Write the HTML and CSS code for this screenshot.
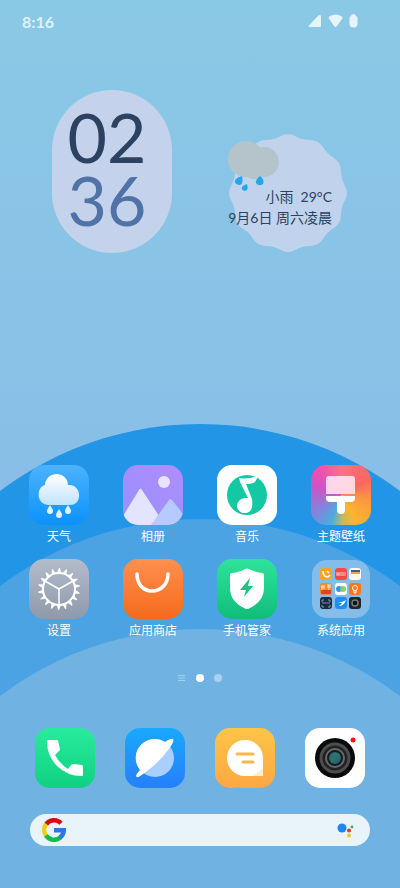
FILE: index.html
```html
<!DOCTYPE html>
<html lang="zh-CN">
<head>
  <meta charset="UTF-8">
  <meta name="viewport" content="width=device-width, initial-scale=1.0">
  <title>桌面</title>
  <link rel="stylesheet" href="styles.css">
</head>
<body>
  <svg class="wallpaper" viewBox="0 0 400 888" preserveAspectRatio="xMidYMax slice" aria-hidden="true">
    <circle cx="200" cy="756" r="332" fill="#2295e6"/>
    <circle cx="200" cy="851" r="332" fill="#4ba3e3"/>
    <circle cx="200" cy="961" r="332" fill="#70b3e3"/>
  </svg>

  <header class="status-bar">
    <span class="time">8:16</span>
    <svg class="status-icons" width="50" height="14" viewBox="0 0 50 14" fill="#e6f5fb">
      <path d="M1.500 13 Q0 13 1 11.500 L10.500 1.500 Q13 0 13 2.500 V11.500 Q13 13 11.500 13Z"/>
      <path d="M21 4.500 Q20 3 22 2 Q28 -1 33 2 Q35.500 3 34 5 L29 12 Q27.500 14 26 12Z"/>
      <path d="M43 2 Q43.500 0 45.500 0 Q47.500 0 48 2 Q49.500 2.500 49.500 4 V10 Q49.500 13.500 45.500 13.500 Q41.500 13.500 41.500 10 V4 Q41.500 2.500 43 2Z"/>
    </svg>
  </header>

  <main>
    <section class="widgets">
      <div class="clock">
        <span class="hours">02</span>
        <span class="minutes">36</span>
      </div>
      <div class="weather">
        <svg class="weather-bg" viewBox="-60 -60 120 120">
          <path fill="#c1d3ec" d="M57 -7 Q61 0 57 7 Q53 14 53 22 Q53 30 46 35 Q39 39 35 46 Q30 53 22 53 Q14 53 7 57 Q0 61 -7 57 Q-14 53 -22 53 Q-30 53 -35 46 Q-39 39 -46 35 Q-53 30 -53 22 Q-53 14 -57 7 Q-61 0 -57 -7 Q-53 -14 -53 -22 Q-53 -30 -46 -35 Q-39 -39 -35 -46 Q-30 -53 -22 -53 Q-14 -53 -7 -57 Q0 -61 7 -57 Q14 -53 22 -53 Q30 -53 35 -46 Q39 -39 46 -35 Q53 -30 53 -22 Q53 -14 57 -7Z"/>
          <g fill="#b5c3ca">
            <circle cx="-42" cy="-34" r="18"/>
            <circle cx="-24" cy="-31" r="15"/>
            <circle cx="-34" cy="-27" r="13"/>
          </g>
          <g fill="#22a7ea">
            <path d="M-46 -17 Q-44 -8 -49 -8 Q-54 -9 -53 -13 Q-50 -16 -46 -17Z"/>
            <path d="M-41 -9 Q-39 -3 -43 -2 Q-47 -3 -46 -6 Q-44 -8 -41 -9Z"/>
            <path d="M-28 -17 Q-23 -13 -25 -9 Q-29 -6 -32 -10 Q-33 -13 -28 -17Z"/>
          </g>
        </svg>
        <p class="weather-text">小雨&nbsp; 29°C<br>9月6日 周六凌晨</p>
      </div>
    </section>

    <nav class="apps">
      <button class="app" type="button">
        <svg class="icon" viewBox="0 0 60 60">
          <defs>
            <linearGradient id="sky" x2="0" y2="1"><stop stop-color="#4cb2ff"/><stop offset="1" stop-color="#0b92fb"/></linearGradient>
            <linearGradient id="cloud" x2="0" y2="1"><stop stop-color="#fff"/><stop offset="1" stop-color="#bfe3ff"/></linearGradient>
          </defs>
          <rect width="60" height="60" rx="15" fill="url(#sky)"/>
          <path d="M20 40 C7 40 7 22 16 20 C17 6 38 5 39 20 C53 19 54 40 41 40Z" fill="url(#cloud)"/>
          <g fill="#e1f3ff">
            <path id="drop" d="M21 40 C22 42 24 44 24 46 A3 3 0 0 1 18 46 C18 44 20 42 21 40Z"/>
            <use href="#drop" x="9" y="4"/>
            <use href="#drop" x="18"/>
          </g>
        </svg>
        <span>天气</span>
      </button>
      <button class="app" type="button">
        <svg class="icon" viewBox="0 0 60 60">
          <defs>
            <linearGradient id="violet" x1="1" x2="0" y2="1"><stop stop-color="#b08cff"/><stop offset="1" stop-color="#9591fb"/></linearGradient>
            <clipPath id="tile"><rect width="60" height="60" rx="15"/></clipPath>
          </defs>
          <g clip-path="url(#tile)">
            <rect width="60" height="60" fill="url(#violet)"/>
            <circle cx="41" cy="17" r="6" fill="#e9e3ff"/>
            <path d="M0 51 L16 25 Q17 22 19 25 L42 60 H0Z" fill="#e3e4ff"/>
            <path d="M28 60 L46 35 Q47 33 49 35 L60 49 V60Z" fill="#b7caff"/>
          </g>
        </svg>
        <span>相册</span>
      </button>
      <button class="app" type="button">
        <svg class="icon" viewBox="0 0 60 60">
          <rect width="60" height="60" rx="15" fill="#fff"/>
          <circle cx="30" cy="30" r="20" fill="#13c9a4"/>
          <path d="M22 13 Q33 15 42 10 L38 17 Q35 19 29 19 L35 34 Q37 48 28 48 A7.500 7.500 0 0 1 20 41 Q21 33 29 33 L31 33 L23 17Z" fill="#fff"/>
        </svg>
        <span>音乐</span>
      </button>
      <button class="app" type="button">
        <svg class="icon theme" viewBox="0 0 60 60">
          <path d="M15 14 Q15 11 18 11 H41 Q44 11 44 14 V29 H15Z" fill="#ffe3ef" fill-opacity=".9"/>
          <path d="M15 31 H44 V33 Q44 37 40 37 H34 V45 Q34 49 30 49 Q26 49 26 45 V37 H19 Q15 37 15 33Z" fill="#fff"/>
        </svg>
        <span>主题壁纸</span>
      </button>
      <button class="app" type="button">
        <svg class="icon" viewBox="0 0 60 60">
          <defs>
            <linearGradient id="steel" x2="0" y2="1"><stop stop-color="#b3bccb"/><stop offset="1" stop-color="#8f99aa"/></linearGradient>
          </defs>
          <rect width="60" height="60" rx="15" fill="url(#steel)"/>
          <g transform="translate(30 30)" fill="#fff">
            <circle r="16" fill="none" stroke="#fff" stroke-width="2"/>
            <path d="M0 0 V16 M0 0 L-14 -8 M0 0 L14 -8" stroke="#fff" stroke-width="1.500"/>
            <g id="teeth">
              <path id="tooth" d="M-2 -16 L0 -21 L1 -21 L2 -16Z"/>
              <use href="#tooth" transform="rotate(20)"/>
              <use href="#tooth" transform="rotate(40)"/>
            </g>
            <use href="#teeth" transform="rotate(60)"/>
            <use href="#teeth" transform="rotate(120)"/>
            <use href="#teeth" transform="rotate(180)"/>
            <use href="#teeth" transform="rotate(240)"/>
            <use href="#teeth" transform="rotate(300)"/>
          </g>
        </svg>
        <span>设置</span>
      </button>
      <button class="app" type="button">
        <svg class="icon" viewBox="0 0 60 60">
          <defs>
            <linearGradient id="orange" x2="0" y2="1"><stop stop-color="#ff8f50"/><stop offset="1" stop-color="#f46b1b"/></linearGradient>
          </defs>
          <rect width="60" height="60" rx="15" fill="url(#orange)"/>
          <path d="M14 15 C14 25 20 32 29 32 S45 25 45 15" fill="none" stroke="#fff" stroke-width="3.500" stroke-linecap="round"/>
        </svg>
        <span>应用商店</span>
      </button>
      <button class="app" type="button">
        <svg class="icon" viewBox="0 0 60 60">
          <defs>
            <linearGradient id="green" x2="0" y2="1"><stop stop-color="#2fe39b"/><stop offset="1" stop-color="#10bd7a"/></linearGradient>
          </defs>
          <rect width="60" height="60" rx="15" fill="url(#green)"/>
          <path d="M28 10 Q30 9 32 10 Q37 13 45 14 Q47 14 47 16 V29 Q47 43 31 50 Q30 50 29 50 Q13 43 13 29 V16 Q13 14 15 14 Q23 13 28 10Z" fill="#fff"/>
          <path d="M33 19 L23 31 H29 L27 38 L36 27 H31Z" fill="#18c57f"/>
        </svg>
        <span>手机管家</span>
      </button>
      <button class="app" type="button">
        <svg class="icon" viewBox="0 0 60 60">
          <rect x="1" y="1" width="58" height="58" rx="15" fill="#84bdea"/>
          <rect x="9" y="9" width="12" height="12" rx="3" fill="#ffa21f"/>
          <path d="M12 12 Q12 18 17 18 L19 16 M16 12 L18 14" fill="none" stroke="#fff" stroke-width="1.500"/>
          <rect x="24" y="9" width="12" height="12" rx="3" fill="#f34b43"/>
          <path d="M26 13 V17 M28 13 V17 M30 13 V17 M32 13 V17 M34 13 V17 M26 15 H28" stroke="#ffc9c4"/>
          <rect x="38" y="9" width="12" height="12" rx="3" fill="#fbf8f3"/>
          <path d="M40 12 H49" stroke="#4d5c85" stroke-width="2"/>
          <path d="M40 14 H49" stroke="#f5a04a" stroke-width="2"/>
          <rect x="9" y="24" width="12" height="12" rx="3" fill="#f08a2c"/>
          <path d="M11 26 V31 M13 26 V30 M10 28 H14 M16 26 H20 M16 28 H20 M18 26 V31" stroke="#ffe9b8"/>
          <rect x="10" y="31" width="10" height="4" rx="1" fill="#e04028"/>
          <rect x="24" y="24" width="12" height="12" rx="3" fill="#fff"/>
          <circle cx="28" cy="30" r="3" fill="#3a8ff2"/>
          <circle cx="32" cy="30" r="3" fill="#74cf62" fill-opacity=".9"/>
          <rect x="38" y="24" width="12" height="12" rx="3" fill="#fb7416"/>
          <circle cx="44" cy="29" r="2.500" fill="none" stroke="#fff"/>
          <path d="M43 31 V34 H45 V31" fill="none" stroke="#fff"/>
          <rect x="9" y="38" width="12" height="12" rx="3" fill="#1e2a3a"/>
          <path d="M11 43 V41 H13 M17 41 H19 V43 M11 46 V48 H13 M17 48 H19 V46" fill="none" stroke="#8497b0"/>
          <path d="M11 44 H19" stroke="#4f93e5"/>
          <rect x="24" y="38" width="12" height="12" rx="3" fill="#1d90f7"/>
          <path d="M25 43 Q31 44 35 41 Q33 47 28 47 L31 44Z" fill="#fff"/>
          <rect x="38" y="38" width="12" height="12" rx="3" fill="#20262b"/>
          <circle cx="44" cy="44" r="3" fill="#111" stroke="#747b80" stroke-width="1.500"/>
        </svg>
        <span>系统应用</span>
      </button>
    </nav>

    <div class="pager" aria-hidden="true">
      <svg width="8" height="8" viewBox="0 0 8 8"><path d="M0 1.500 H7 M0 4 H7 M0 6.500 H7" stroke="#a5d0ef"/></svg>
      <span class="dot active"></span>
      <span class="dot"></span>
    </div>
  </main>

  <footer>
    <nav class="dock">
      <button class="app" type="button" aria-label="电话">
        <svg class="icon" viewBox="0 0 60 60">
          <defs>
            <linearGradient id="call" x2="0" y2="1"><stop stop-color="#29eb9d"/><stop offset="1" stop-color="#0ed181"/></linearGradient>
          </defs>
          <rect width="60" height="60" rx="15" fill="url(#call)"/>
          <path d="M12 13 Q12 12 13 12 H22 Q23 12 23 13 L25 21 Q25 23 23 24 L20 27 Q25 36 33 41 L36 37 Q37 36 39 36 L47 37 Q48 38 48 39 V47 Q48 48 47 48 Q32 48 22 38 Q12 28 12 13Z" fill="#fff"/>
        </svg>
      </button>
      <button class="app" type="button" aria-label="浏览器">
        <svg class="icon" viewBox="0 0 60 60">
          <defs>
            <linearGradient id="web" x2="0" y2="1"><stop stop-color="#19a9fc"/><stop offset="1" stop-color="#267ffc"/></linearGradient>
          </defs>
          <rect width="60" height="60" rx="15" fill="url(#web)"/>
          <circle cx="30" cy="30" r="19" fill="#a9cfff"/>
          <path d="M15 42 A19 19 0 0 1 40 14 Q46 10 48 11 Q50 13 43 22 Q34 35 18 46 Q12 51 11 48 Q11 46 15 42Z" fill="#fff"/>
        </svg>
      </button>
      <button class="app" type="button" aria-label="短信">
        <svg class="icon" viewBox="0 0 60 60">
          <defs>
            <linearGradient id="amber" x2="0" y2="1"><stop stop-color="#fdc546"/><stop offset="1" stop-color="#ffa744"/></linearGradient>
          </defs>
          <rect width="60" height="60" rx="15" fill="url(#amber)"/>
          <path d="M30 12 A18 18 0 0 1 48 30 V47 Q48 48 47 48 H30 A18 18 0 0 1 30 12Z" fill="#fff"/>
          <path d="M38 47 Q45 44 48 39 V47 Q48 48 47 48 H38Z" fill="#ffedcf"/>
          <path d="M22 26 H38 M28 34 H38" stroke="#fdb64d" stroke-width="3" stroke-linecap="round"/>
        </svg>
      </button>
      <button class="app" type="button" aria-label="相机">
        <svg class="icon" viewBox="0 0 60 60">
          <defs>
            <linearGradient id="lens" x2="1" y2="1"><stop stop-color="#315f92"/><stop offset=".5" stop-color="#2c7563"/><stop offset="1" stop-color="#244d91"/></linearGradient>
          </defs>
          <rect width="60" height="60" rx="15" fill="#fff"/>
          <circle cx="30" cy="30" r="20" fill="#090a0b"/>
          <circle cx="30" cy="30" r="14" fill="#202122" stroke="#4b4d4e" stroke-width="3"/>
          <circle cx="30" cy="30" r="9" fill="#171819" stroke="#66696a" stroke-width="2"/>
          <circle cx="30" cy="30" r="6" fill="url(#lens)"/>
          <circle cx="48" cy="12" r="2.500" fill="#fb1414"/>
        </svg>
      </button>
    </nav>

    <form class="search">
      <svg width="24" height="24" viewBox="0 0 24 24" fill="none" stroke-width="4.500">
        <path d="M4 6.500 A9.750 9.750 0 0 1 19 5.200" stroke="#dc0b12"/>
        <path d="M4.300 18 A9.750 9.750 0 0 1 4.300 6" stroke="#ecd019"/>
        <path d="M18.300 19.500 A9.750 9.750 0 0 1 4 17.500" stroke="#0fbd4a"/>
        <path d="M12 12.200 H21.750 Q21.750 16.500 18 19.700" stroke="#2e76e8"/>
      </svg>
      <input type="text" aria-label="搜索">
      <button type="button" aria-label="语音助手">
        <svg width="18" height="18" viewBox="0 0 18 18">
          <circle cx="6" cy="7" r="4.500" fill="#1a86ef"/>
          <circle cx="13" cy="9.500" r="2" fill="#dd3b25"/>
          <circle cx="16" cy="6" r="1.400" fill="#2fb457"/>
          <circle cx="13" cy="14.500" r="2" fill="#f6c71e"/>
        </svg>
      </button>
    </form>
  </footer>
</body>
</html>
```
FILE: styles.css
```css
* {
  box-sizing: border-box;
}
body {
  margin: 0;
  min-height: 100vh;
  display: flex;
  flex-direction: column;
  position: relative;
  font-family: "Noto Sans", "Noto Sans CJK SC", sans-serif;
  background: linear-gradient(#8ac9e6, #88bde7 60%);
}
button {
  padding: 0;
  border: none;
  background: none;
  font: inherit;
  cursor: pointer;
}
.wallpaper {
  position: absolute;
  top: 0;
  left: 0;
  width: 100%;
  height: 100%;
  z-index: -1;
}
.status-bar {
  display: flex;
  justify-content: space-between;
  align-items: center;
  height: 42px;
  padding: 0 42px 0 22px;
}
.time {
  font-family: Lato, sans-serif;
  font-size: 16px;
  font-weight: bold;
  color: #def2fb;
}
main {
  flex: 1;
  display: flex;
  flex-direction: column;
}
.widgets {
  display: flex;
  justify-content: space-between;
  align-items: flex-end;
  padding: 48px 52px 24px;
}
.clock {
  display: flex;
  flex-direction: column;
  align-items: center;
  width: 120px;
  height: 163px;
  padding: 15px 10px 0 0;
  border-radius: 60px;
  background: #c4d2eb;
  font-family: Lato, sans-serif;
  font-size: 68px;
  line-height: 63px;
}
.hours {
  color: #2c4260;
}
.minutes {
  color: #4f73a6;
}
.weather {
  position: relative;
  width: 120px;
  height: 120px;
}
.weather-bg {
  display: block;
  width: 100%;
}
.weather-text {
  position: absolute;
  right: 16px;
  top: 53px;
  margin: 0;
  font-family: Lato, "Noto Sans CJK SC", sans-serif;
  font-size: 14px;
  line-height: 21px;
  text-align: right;
  white-space: nowrap;
  color: #2c4260;
}
.apps {
  display: grid;
  grid-template-columns: repeat(4, 1fr);
  row-gap: 10px;
  margin-top: auto;
  padding: 0 12px;
}
.app {
  display: flex;
  flex-direction: column;
  align-items: center;
  color: #fff;
  font-size: 12px;
  line-height: 24px;
}
.icon {
  display: block;
  width: 60px;
  height: 60px;
}
.theme {
  border-radius: 15px;
  background: conic-gradient(#fb6f8b, #fb6660 60deg, #fd9643 100deg, #fbb52c 150deg, #ccb955 175deg, #4bacdf 200deg, #8b7fdc 240deg, #d052c4 290deg, #ee51af 320deg, #fb6f8b);
}
.pager {
  display: flex;
  justify-content: center;
  align-items: center;
  gap: 10px;
  height: 18px;
  margin: 26px 0 41px;
}
.dot {
  width: 8px;
  height: 8px;
  border-radius: 50%;
  background: #a8d2ef;
}
.dot.active {
  background: #fff;
}
.dock {
  display: grid;
  grid-template-columns: repeat(4, 1fr);
  padding: 0 20px;
}
.search {
  display: flex;
  align-items: center;
  height: 32px;
  margin: 26px 30px 42px;
  padding: 0 16px 0 12px;
  border-radius: 16px;
  background: #e9f3fa;
}
.search input {
  flex: 1;
  min-width: 0;
  border: none;
  outline: none;
  background: none;
  font-size: 14px;
}
.search button {
  display: flex;
}
```
